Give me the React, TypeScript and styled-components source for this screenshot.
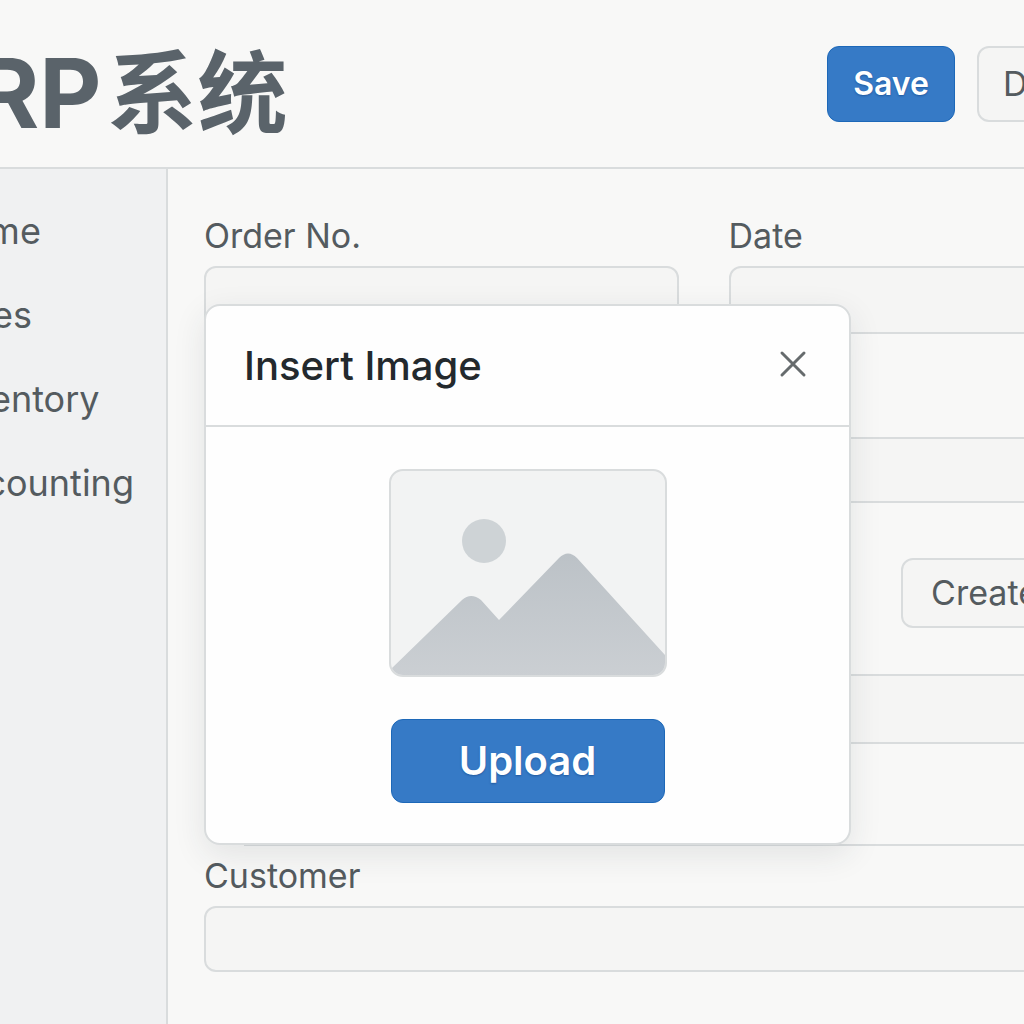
import React from "react";
import styled, { createGlobalStyle, css } from "styled-components";

const color = {
  page: "#f8f8f7",
  field: "#f5f5f4",
  sidebar: "#f0f1f2",
  line: "#d9dcdd",
  text: "#545b5f",
  brand: "#5a636a",
  heading: "#23292d",
  primary: "#367ac6",
  primaryEdge: "#1d68b8",
};

const GlobalStyle = createGlobalStyle`
  *, *::before, *::after { box-sizing: border-box; }
  body {
    margin: 0;
    background: ${color.page};
    color: ${color.text};
    font-family: Inter, "Noto Sans CJK SC", sans-serif;
  }
  button, input { font: inherit; color: inherit; }
`;

const Viewport = styled.div`
  overflow: hidden;
`;

/* The workspace bleeds past both edges of the window. */
const Shell = styled.div`
  display: flex;
  flex-direction: column;
  min-height: 100vh;
  margin: 0 -142px 0 -96px;
`;

const Header = styled.header`
  display: flex;
  align-items: flex-start;
  justify-content: space-between;
  height: 169px;
  padding: 46px 34px 0 14px;
  border-bottom: 2px solid ${color.line};
`;

const Brand = styled.h1`
  display: flex;
  align-items: flex-start;
  gap: 6px;
  margin: 0;
  color: ${color.brand};
  font-size: 96px;
  font-weight: 700;
  line-height: 94px;
  white-space: nowrap;
`;

const BrandHan = styled.span`
  font-family: "Noto Sans CJK SC", sans-serif;
  font-size: 90px;
  line-height: 82px;
`;

const Actions = styled.div`
  display: flex;
  gap: 22px;
`;

const Button = styled.button<{ $primary?: boolean; $size?: "medium" | "large" }>`
  height: 76px;
  padding: 0 24px;
  border: 2px solid ${color.line};
  border-radius: 12px;
  background: ${color.field};
  font-size: 34px;
  line-height: 44px;
  white-space: nowrap;
  ${(p) =>
    p.$primary &&
    css`
      padding: 0 25px;
      border: 1px solid ${color.primaryEdge};
      background: ${color.primary};
      color: #fff;
      font-size: 32px;
      font-weight: 600;
      text-shadow: 0 1px 2px rgba(0, 40, 100, 0.4);
    `}
  ${(p) =>
    p.$size === "medium" &&
    css`
      height: 70px;
      padding: 0 28px;
    `}
  ${(p) =>
    p.$size === "large" &&
    css`
      width: 274px;
      height: 84px;
      font-size: 40px;
    `}
`;

const Body = styled.div`
  display: flex;
  flex: 1;
`;

const Sidebar = styled.nav`
  flex: none;
  width: 264px;
  padding: 40px 36px;
  border-right: 2px solid ${color.line};
  background: ${color.sidebar};
`;

const NavList = styled.ul`
  display: flex;
  flex-direction: column;
  gap: 40px;
  margin: 0;
  padding: 0;
  list-style: none;
`;

const NavLink = styled.a`
  display: block;
  color: inherit;
  font-size: 36px;
  line-height: 44px;
  text-decoration: none;
`;

const Main = styled.main`
  position: relative;
  flex: 1;
  min-width: 0;
  padding: 45px 36px;
`;

const FieldRow = styled.div`
  display: grid;
  grid-template-columns: 13fr 11fr;
  gap: 50px;
  margin-bottom: 103px;
`;

const Field = styled.div`
  display: flex;
  flex-direction: column;
  gap: 8px;
  min-width: 0;
`;

const Label = styled.label`
  font-size: 34px;
  line-height: 44px;
`;

const Input = styled.input<{ $compact?: boolean }>`
  width: 100%;
  height: ${(p) => (p.$compact ? 66 : 68)}px;
  padding: 0 20px;
  border: 2px solid ${color.line};
  border-radius: 12px;
  background: ${color.field};
  font-size: 32px;
`;

const Band = styled.div<{ $height: number }>`
  height: ${(p) => p.$height}px;
  border: solid ${color.line};
  border-width: 2px 0;
  background: ${color.field};
`;

const Toolbar = styled.div`
  display: flex;
  justify-content: flex-end;
  padding: 55px 62px 46px 0;
`;

const Spacer = styled.div`
  height: 102px;
  margin: 0 0 8px 40px;
  border-bottom: 2px solid ${color.line};
`;

const Modal = styled.section`
  position: absolute;
  top: 135px;
  left: 36px;
  width: 647px;
  border: 2px solid ${color.line};
  border-radius: 16px;
  background: #fefefe;
  box-shadow: 0 10px 32px rgba(40, 50, 55, 0.1);
`;

const ModalHeader = styled.div`
  display: flex;
  align-items: center;
  justify-content: space-between;
  height: 121px;
  padding: 0 38px;
  border-bottom: 2px solid ${color.line};
`;

const ModalTitle = styled.h2`
  margin: 0;
  color: ${color.heading};
  font-size: 40px;
  font-weight: 500;
  line-height: 48px;
`;

const CloseButton = styled.button`
  display: flex;
  padding: 0 0 4px;
  border: 0;
  background: none;
`;

const ModalBody = styled.div`
  display: flex;
  flex-direction: column;
  align-items: center;
  gap: 42px;
  padding: 42px 40px 40px;
`;

const Preview = styled.div`
  width: 278px;
  height: 208px;
  overflow: hidden;
  border: 2px solid ${color.line};
  border-radius: 14px;
  background: #f2f3f3;
`;

const navItems = ["Home", "Sales", "Inventory", "Accounting"];

function PictureIcon() {
  return (
    <svg width="274" height="204" viewBox="0 0 274 204" display="block" aria-hidden="true">
      <defs>
        <linearGradient id="hills" x1="0" y1="0" x2="0" y2="1">
          <stop offset="0" stopColor="#bcc2c7" />
          <stop offset="1" stopColor="#cbcfd3" />
        </linearGradient>
      </defs>
      <circle cx="93" cy="70" r="22" fill="#ced3d6" />
      <path
        d="M-2 200L71 129Q80 121 90 129L108 149L168 87Q177 78 186 87L274 184V206H-2Z"
        fill="url(#hills)"
      />
    </svg>
  );
}

function CloseIcon() {
  return (
    <svg width="36" height="36" viewBox="0 0 36 36" aria-hidden="true">
      <path d="M7 7L29 29M29 7L7 29" stroke="#666b6d" strokeWidth="3" strokeLinecap="round" />
    </svg>
  );
}

export default function App() {
  return (
    <Viewport>
      <GlobalStyle />
      <Shell>
        <Header>
          <Brand>
            ERP<BrandHan lang="zh-CN">系统</BrandHan>
          </Brand>
          <Actions>
            <Button type="button" $primary>Save</Button>
            <Button type="button">Delete</Button>
          </Actions>
        </Header>
        <Body>
          <Sidebar>
            <NavList>
              {navItems.map((item) => (
                <li key={item}>
                  <NavLink href="#">{item}</NavLink>
                </li>
              ))}
            </NavList>
          </Sidebar>
          <Main>
            <FieldRow>
              <Field>
                <Label htmlFor="order-no">Order No.</Label>
                <Input id="order-no" type="text" />
              </Field>
              <Field>
                <Label htmlFor="date">Date</Label>
                <Input id="date" type="text" />
              </Field>
            </FieldRow>
            <Band $height={66} />
            <Toolbar>
              <Button type="button" $size="medium">Create</Button>
            </Toolbar>
            <Band $height={70} />
            <Spacer />
            <Field>
              <Label htmlFor="customer">Customer</Label>
              <Input id="customer" type="text" $compact />
            </Field>
            <Modal role="dialog" aria-labelledby="modal-title">
              <ModalHeader>
                <ModalTitle id="modal-title">Insert Image</ModalTitle>
                <CloseButton type="button" aria-label="Close">
                  <CloseIcon />
                </CloseButton>
              </ModalHeader>
              <ModalBody>
                <Preview>
                  <PictureIcon />
                </Preview>
                <Button type="button" $primary $size="large">Upload</Button>
              </ModalBody>
            </Modal>
          </Main>
        </Body>
      </Shell>
    </Viewport>
  );
}
